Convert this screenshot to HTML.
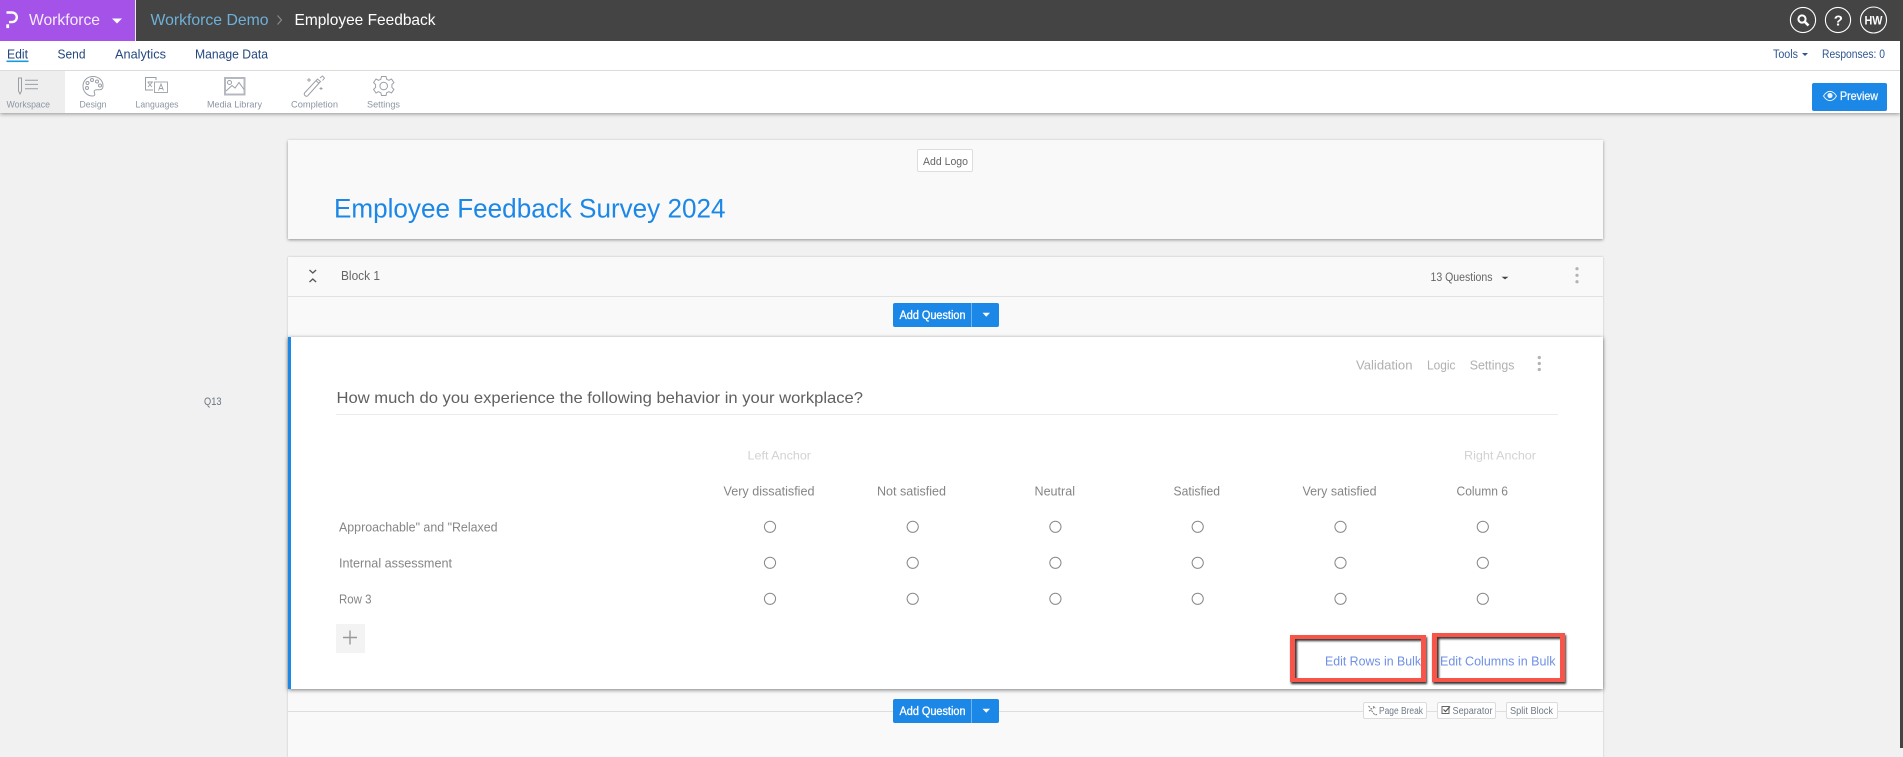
<!DOCTYPE html>
<html><head><meta charset="utf-8"><title>Employee Feedback</title>
<style>
html,body{margin:0;padding:0;width:1903px;height:748px;overflow:hidden;background:#f1f1f1;font-family:"Liberation Sans",sans-serif}
.b{position:absolute;box-sizing:border-box}
svg{position:absolute;left:0;top:0}
text{font-family:"Liberation Sans",sans-serif}
</style></head><body>
<div class="b" style="left:0;top:113px;width:1900px;height:635px;background:#f1f1f1"></div>
<div class="b" style="left:0;top:41px;width:1900px;height:72px;background:#fff;box-shadow:0 1px 4px rgba(0,0,0,.4)"></div>
<div class="b" style="left:0;top:70px;width:1900px;height:1px;background:#dcdcdc"></div>
<div class="b" style="left:0;top:71px;width:65px;height:42px;background:#eeeeee"></div>
<div class="b" style="left:0;top:0;width:1903px;height:41px;background:#444444"></div>
<div class="b" style="left:0;top:0;width:136px;height:41px;background:#a552e8;border-right:1px solid #e9e9e9"></div>
<div class="b" style="left:1900px;top:41px;width:3px;height:707px;background:#444"></div>
<div class="b" style="left:1812px;top:83px;width:75px;height:28px;background:#1b87e6;border-radius:2px"></div>

<div class="b" style="left:288px;top:139.500px;width:1315px;height:99px;background:#f9f9f9;box-shadow:0 1px 3px rgba(0,0,0,.4)"></div>
<div class="b" style="left:917px;top:149px;width:56px;height:23px;background:#fff;border:1px solid #ddd;border-radius:2px"></div>

<div class="b" style="left:288px;top:257px;width:1315px;height:500px;background:#f9f9f9;box-shadow:0 0 2px rgba(0,0,0,.22)"></div>
<div class="b" style="left:288px;top:296px;width:1315px;height:1px;background:#e2e2e2"></div>
<div class="b" style="left:288px;top:711px;width:1315px;height:1px;background:#dedede"></div>
<div class="b" style="left:288px;top:337px;width:1315px;height:352px;background:#fff;border-left:3px solid #1b87e6;box-shadow:0 1px 4px rgba(0,0,0,.5)"></div>
<div class="b" style="left:336px;top:414px;width:1222px;height:1px;background:#ebebeb"></div>
<div class="b" style="left:336px;top:624px;width:29px;height:29px;background:#f3f3f3"></div>

<div class="b" style="left:893px;top:303px;width:106px;height:24px;background:#1b87e6;border-radius:2px"></div>
<div class="b" style="left:971px;top:303px;width:1px;height:24px;background:#6fb3ef"></div>
<div class="b" style="left:893px;top:699px;width:106px;height:24px;background:#1b87e6;border-radius:2px"></div>
<div class="b" style="left:971px;top:699px;width:1px;height:24px;background:#6fb3ef"></div>

<div class="b" style="left:1363px;top:702px;width:64px;height:17px;background:#fff;border:1px solid #dcdcdc;border-radius:2px"></div>
<div class="b" style="left:1437px;top:702px;width:59px;height:17px;background:#fff;border:1px solid #dcdcdc;border-radius:2px"></div>
<div class="b" style="left:1506px;top:702px;width:52px;height:17px;background:#fff;border:1px solid #dcdcdc;border-radius:2px"></div>

<div class="b" style="left:1289.500px;top:635px;width:136px;height:46.500px;border:4px solid #f8554a;border-width:4px 5px;box-shadow:1px 2px 2px #333,inset 2px 2px 2px #333"></div>
<div class="b" style="left:1431.500px;top:633px;width:133.500px;height:48.500px;border:4px solid #f8554a;border-width:4px 5px;box-shadow:1px 2px 2px #333,inset 2px 2px 2px #333"></div>

<svg width="1903" height="748" viewBox="0 0 1903 748" xmlns="http://www.w3.org/2000/svg">
<!-- logo -->
<path d="M6.500 12.500H12a4.800 4.800 0 0 1 0 9.600H9" fill="none" stroke="#fff" stroke-width="2.400"/>
<rect x="6.300" y="24.300" width="2.800" height="3.800" fill="#fff"/>
<g font-size="16">
<text x="29" y="25" textLength="71" lengthAdjust="spacingAndGlyphs" fill="#f4ecfd">Workforce</text>
<text x="150.500" y="25" textLength="118" lengthAdjust="spacingAndGlyphs" fill="#6fb0d8">Workforce Demo</text>
<text x="294.500" y="25" textLength="141" lengthAdjust="spacingAndGlyphs" fill="#fff">Employee Feedback</text>
</g>
<path d="M112 18.500h10l-5 5z" fill="#fff"/>
<path d="M277.500 15.500l4 4.500-4 4.500" fill="none" stroke="#888" stroke-width="1.200"/>
<!-- header circles -->
<g fill="none" stroke="#fff" stroke-width="1.100">
<circle cx="1803" cy="20" r="12.600"/><circle cx="1838" cy="20" r="12.600"/><circle cx="1873.500" cy="20" r="13"/>
</g>
<circle cx="1802" cy="19" r="3.600" fill="none" stroke="#fff" stroke-width="2"/>
<path d="M1804.800 21.800l3.700 3.700" stroke="#fff" stroke-width="2.600"/>
<text x="1838.300" y="25.500" font-size="15" font-weight="bold" fill="#fff" text-anchor="middle">?</text>
<text x="1864.500" y="24.500" font-size="12" font-weight="bold" textLength="18" lengthAdjust="spacingAndGlyphs" fill="#fff">HW</text>
<!-- nav -->
<g font-size="13" fill="#24487f">
<text x="7" y="58.500" textLength="21" lengthAdjust="spacingAndGlyphs">Edit</text>
<text x="57.500" y="58.500" textLength="28" lengthAdjust="spacingAndGlyphs">Send</text>
<text x="115" y="58.500" textLength="51" lengthAdjust="spacingAndGlyphs">Analytics</text>
<text x="195" y="58.500" textLength="73" lengthAdjust="spacingAndGlyphs">Manage Data</text>
</g>
<rect x="6.500" y="60.500" width="22" height="1.600" fill="#1a9ad6"/>
<g font-size="11.500" fill="#2f5590">
<text x="1773" y="58" textLength="25" lengthAdjust="spacingAndGlyphs">Tools</text>
<text x="1822" y="58" textLength="63" lengthAdjust="spacingAndGlyphs">Responses: 0</text>
</g>
<path d="M1802 53h6l-3 3z" fill="#2f5590"/>
<!-- toolbar labels -->
<g font-size="9.500" fill="#8b95a3">
<text x="6.500" y="107.500" textLength="43.500" lengthAdjust="spacingAndGlyphs">Workspace</text>
<text x="79.500" y="107.500" textLength="27" lengthAdjust="spacingAndGlyphs">Design</text>
<text x="135.500" y="107.500" textLength="43" lengthAdjust="spacingAndGlyphs">Languages</text>
<text x="207" y="107.500" textLength="55" lengthAdjust="spacingAndGlyphs">Media Library</text>
<text x="291" y="107.500" textLength="47" lengthAdjust="spacingAndGlyphs">Completion</text>
<text x="367" y="107.500" textLength="33" lengthAdjust="spacingAndGlyphs">Settings</text>
</g>
<!-- toolbar icons -->
<g fill="none" stroke="#9a9fa6" stroke-width="1">
<path d="M18.500 78h3v13l-1.500 3-1.500-3z"/><path d="M25 80.200h13M25 84.400h13M25 88.800h13"/>
<path d="M93 76.500c-5.800 0-10 4.200-10 9.600 0 5.800 4.500 9.900 9.600 9.900 2.300 0 2.600-1.500 1.900-3-.9-1.900.2-3.300 2.300-3.300h2.800c2.300 0 3.400-1.600 3.400-4 0-5.200-4.500-9.200-10-9.200z"/>
<circle cx="87.500" cy="83" r="1.500"/><circle cx="92" cy="80" r="1.500"/><circle cx="97" cy="81.500" r="1.500"/><circle cx="100" cy="85.500" r="1.500"/><circle cx="87" cy="88" r="1.500"/>
<path d="M156 80v-2.500h-10.500v12.500h7.500"/><path d="M154.500 82h13v10.500h-13z" stroke="#a5aab1"/>
<path d="M148 82.500l4 4.500M152 82.500l-4 4.500M147.500 82h5.500" stroke-width=".9"/>
<path d="M158.500 90.500l2.500-6.500 2.500 6.500M159.500 88.500h3.500" stroke-width=".9"/>
<rect x="224.500" y="77.500" width="20.500" height="17.500" stroke="#b5b9bf"/>
<rect x="225.500" y="78.500" width="18.500" height="15.500" stroke="#b5b9bf"/>
<circle cx="229.500" cy="82.500" r="2"/><path d="M226 91l6-5.500 3 2.500 4-5.500 5 7"/>
<path d="M304.500 93l13-14 3 2.500-13 14.500c-1.500 1-4-1-3-3z"/><path d="M316 80.500l3 3"/>
<path d="M320 78l2.500-2 2 2-2 2.500M309 78v4M307 80h4M321 87v3M319.500 88.500h3" stroke-width=".9"/>
<circle cx="383.700" cy="86" r="3.800"/>
<path d="M381.500 76.500h4.500l.7 2.800 2.200 1 2.600-1.300 2.400 3.600-2 2v2.800l2 2-2.400 3.600-2.600-1.300-2.200 1-.7 2.800h-4.500l-.7-2.800-2.200-1-2.600 1.300-2.400-3.600 2-2v-2.800l-2-2 2.400-3.600 2.600 1.300 2.200-1z"/>
</g>
<!-- preview -->
<path d="M1823.500 96c2-3.200 4-4.600 6.500-4.600s4.500 1.400 6.500 4.600c-2 3.200-4 4.600-6.500 4.600s-4.500-1.400-6.500-4.600z" fill="none" stroke="#e8f2fc" stroke-width="1"/>
<circle cx="1830" cy="95.500" r="2.600" fill="#e8f2fc"/>
<text x="1840" y="100" font-size="12" stroke="#fff" stroke-width=".25" textLength="38" lengthAdjust="spacingAndGlyphs" fill="#f4f9fe">Preview</text>
<!-- title card -->
<text x="923" y="165" font-size="11" textLength="45" lengthAdjust="spacingAndGlyphs" fill="#666">Add Logo</text>
<text x="334" y="217.500" font-size="26.500" textLength="391.500" lengthAdjust="spacingAndGlyphs" fill="#1b87e6">Employee Feedback Survey 2024</text>
<!-- block header -->
<path d="M309.500 270l3.300 3 3.300-3M309.500 282l3.300-3 3.300 3" fill="none" stroke="#555" stroke-width="1.300"/>
<text x="341" y="280" font-size="12.500" textLength="39" lengthAdjust="spacingAndGlyphs" fill="#666">Block 1</text>
<text x="1430.500" y="281" font-size="11.500" textLength="62" lengthAdjust="spacingAndGlyphs" fill="#666">13 Questions</text>
<path d="M1501.500 276.800h7l-3.500 2.600z" fill="#444"/>
<g fill="#b2b2b2"><circle cx="1577" cy="268.700" r="1.600"/><circle cx="1577" cy="275.300" r="1.600"/><circle cx="1577" cy="281.700" r="1.600"/>
<circle cx="1539.300" cy="357.500" r="1.600"/><circle cx="1539.300" cy="363.500" r="1.600"/><circle cx="1539.300" cy="369.500" r="1.600"/></g>
<!-- add question -->
<g font-size="11.500" fill="#fff" stroke="#fff" stroke-width=".3">
<text x="899.500" y="319" textLength="66" lengthAdjust="spacingAndGlyphs">Add Question</text>
<text x="899.500" y="715" textLength="66" lengthAdjust="spacingAndGlyphs">Add Question</text>
</g>
<path d="M982.500 312.800h7.500l-3.750 4zM982.500 708.800h7.500l-3.750 4z" fill="#fff"/>
<!-- question -->
<text x="204" y="405" font-size="11" textLength="17.500" lengthAdjust="spacingAndGlyphs" fill="#6a7480">Q13</text>
<g font-size="12.500" fill="#b0b0b0">
<text x="1356" y="369.500" textLength="56.500" lengthAdjust="spacingAndGlyphs">Validation</text>
<text x="1427" y="369.500" textLength="28.500" lengthAdjust="spacingAndGlyphs">Logic</text>
<text x="1469.700" y="369.500" textLength="44.700" lengthAdjust="spacingAndGlyphs">Settings</text>
</g>
<text x="336.500" y="403" font-size="16" textLength="526.500" lengthAdjust="spacingAndGlyphs" fill="#606060">How much do you experience the following behavior in your workplace?</text>
<g font-size="12" fill="#d2d2d2">
<text x="747.500" y="459.500" textLength="63.500" lengthAdjust="spacingAndGlyphs">Left Anchor</text>
<text x="1464" y="459.500" textLength="72" lengthAdjust="spacingAndGlyphs">Right Anchor</text>
</g>
<g font-size="12.500" fill="#858585">
<text x="723.500" y="495.500" textLength="91" lengthAdjust="spacingAndGlyphs">Very dissatisfied</text>
<text x="877" y="495.500" textLength="69" lengthAdjust="spacingAndGlyphs">Not satisfied</text>
<text x="1034.500" y="495.500" textLength="40.500" lengthAdjust="spacingAndGlyphs">Neutral</text>
<text x="1173.500" y="495.500" textLength="46.500" lengthAdjust="spacingAndGlyphs">Satisfied</text>
<text x="1302.500" y="495.500" textLength="74" lengthAdjust="spacingAndGlyphs">Very satisfied</text>
<text x="1456.500" y="495.500" textLength="51.500" lengthAdjust="spacingAndGlyphs">Column 6</text>
<text x="339" y="531.500" textLength="158.500" lengthAdjust="spacingAndGlyphs">Approachable" and "Relaxed</text>
<text x="339" y="567.500" textLength="113" lengthAdjust="spacingAndGlyphs">Internal assessment</text>
<text x="339" y="603.500" textLength="32.500" lengthAdjust="spacingAndGlyphs">Row 3</text>
</g>
<g fill="#fff" stroke="#888" stroke-width="1">
<circle cx="770" cy="526.800" r="5.600"/><circle cx="912.700" cy="526.800" r="5.600"/><circle cx="1055.400" cy="526.800" r="5.600"/><circle cx="1197.700" cy="526.800" r="5.600"/><circle cx="1340.500" cy="526.800" r="5.600"/><circle cx="1482.800" cy="526.800" r="5.600"/>
<circle cx="770" cy="562.800" r="5.600"/><circle cx="912.700" cy="562.800" r="5.600"/><circle cx="1055.400" cy="562.800" r="5.600"/><circle cx="1197.700" cy="562.800" r="5.600"/><circle cx="1340.500" cy="562.800" r="5.600"/><circle cx="1482.800" cy="562.800" r="5.600"/>
<circle cx="770" cy="598.800" r="5.600"/><circle cx="912.700" cy="598.800" r="5.600"/><circle cx="1055.400" cy="598.800" r="5.600"/><circle cx="1197.700" cy="598.800" r="5.600"/><circle cx="1340.500" cy="598.800" r="5.600"/><circle cx="1482.800" cy="598.800" r="5.600"/>
</g>
<path d="M343 637.500h14M350 630.500v14" stroke="#999" stroke-width="1.400"/>
<g font-size="12.500" fill="#6e90e6">
<text x="1325" y="665.500" textLength="96" lengthAdjust="spacingAndGlyphs">Edit Rows in Bulk</text>
<text x="1440" y="665.500" textLength="115.500" lengthAdjust="spacingAndGlyphs">Edit Columns in Bulk</text>
</g>
<!-- small buttons -->
<g font-size="10" fill="#707a86">
<text x="1379" y="714" textLength="44" lengthAdjust="spacingAndGlyphs">Page Break</text>
<text x="1452.500" y="714" textLength="40" lengthAdjust="spacingAndGlyphs">Separator</text>
<text x="1510" y="714" textLength="43" lengthAdjust="spacingAndGlyphs">Split Block</text>
</g>
<path d="M1368.500 706l3 3 3-1.500M1369 711l2-1 4 5 2-.5M1373 706.500l3 1.500" fill="none" stroke="#777" stroke-width="1" stroke-dasharray="2 1"/>
<path d="M1442 706.500h7v7h-7z" fill="none" stroke="#666" stroke-width="1"/>
<path d="M1443.500 709.500l2 2 4.500-5" fill="none" stroke="#555" stroke-width="1.200"/>
</svg>
</body></html>
